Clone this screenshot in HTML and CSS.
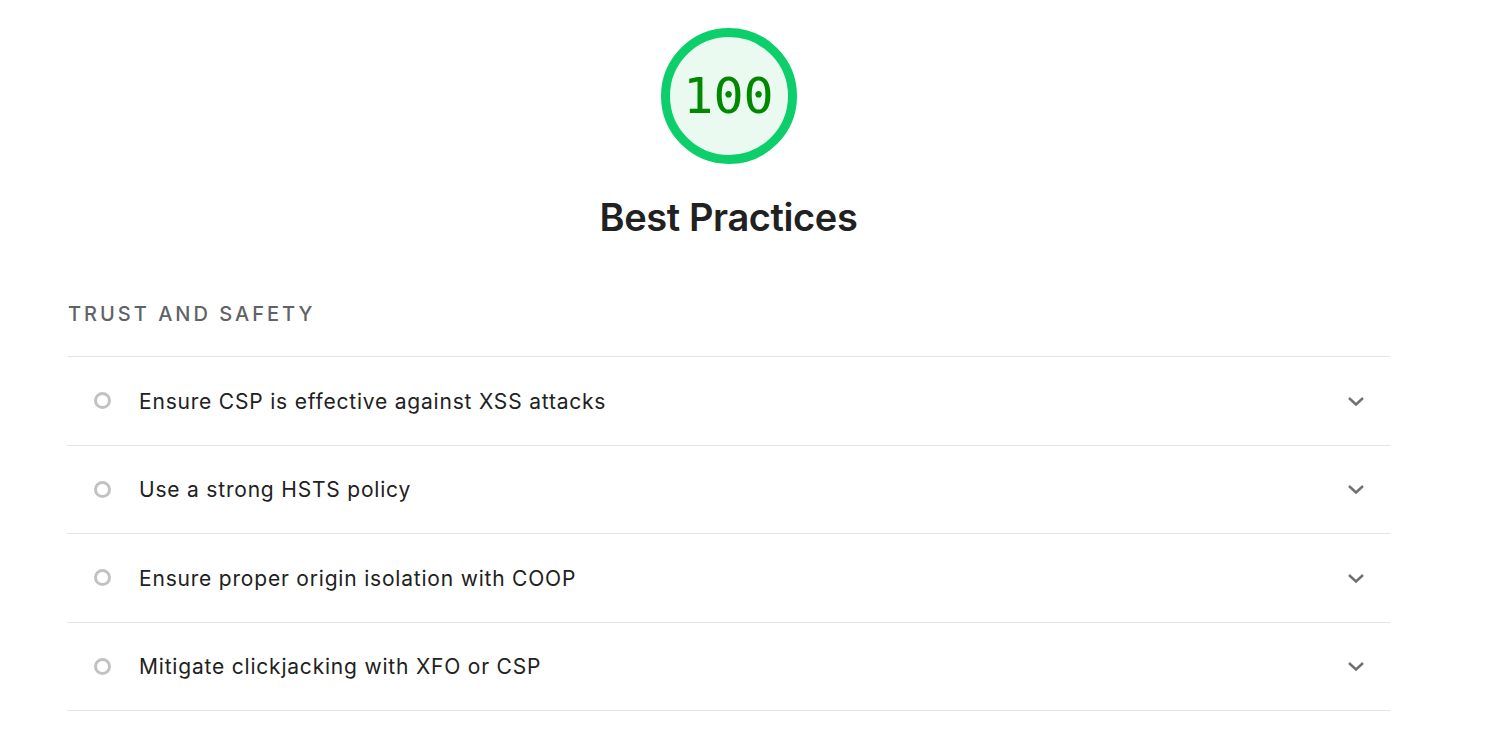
FILE: index.html
```html
<!DOCTYPE html>
<html lang="en">
<head>
    <meta charset="UTF-8">
    <meta name="viewport" content="width=device-width, initial-scale=1.0">
    <title>Best Practices</title>
    <link rel="stylesheet" href="styles.css">
</head>
<body>
    <div class="report">
        <div class="header">
            <div class="gauge">
                <span class="gauge-value">100</span>
            </div>
            <h2 class="title">Best Practices</h2>
        </div>

        <div class="group">
            <h3 class="group-title">TRUST AND SAFETY</h3>

            <div class="audit">
                <span class="audit-icon"></span>
                <span class="audit-text">Ensure CSP is effective against XSS attacks</span>
                <svg class="chevron" viewBox="0 0 24 24"><path d="M5 9l7 6.5L19 9"/></svg>
            </div>

            <div class="audit">
                <span class="audit-icon"></span>
                <span class="audit-text">Use a strong HSTS policy</span>
                <svg class="chevron" viewBox="0 0 24 24"><path d="M5 9l7 6.5L19 9"/></svg>
            </div>

            <div class="audit">
                <span class="audit-icon"></span>
                <span class="audit-text">Ensure proper origin isolation with COOP</span>
                <svg class="chevron" viewBox="0 0 24 24"><path d="M5 9l7 6.5L19 9"/></svg>
            </div>

            <div class="audit">
                <span class="audit-icon"></span>
                <span class="audit-text">Mitigate clickjacking with XFO or CSP</span>
                <svg class="chevron" viewBox="0 0 24 24"><path d="M5 9l7 6.5L19 9"/></svg>
            </div>
        </div>
    </div>
</body>
</html>
```

FILE: styles.css
```css
body {
    margin: 0;
    background-color: #ffffff;
    font-family: Inter, "Noto Sans", sans-serif;
    color: #212121;
}

.report {
    width: 1323px;
    margin-left: 67px;
    padding-top: 28px;
}

/* gauge + titre */
.header {
    display: flex;
    flex-direction: column;
    align-items: center;
}

.gauge {
    width: 118px;
    height: 118px;
    border: 9px solid #0cce6b;
    border-radius: 50%;
    background-color: #eafaf1;
    display: flex;
    justify-content: center;
    align-items: center;
}

.gauge-value {
    font-family: "DejaVu Sans Mono", "Liberation Mono", monospace;
    font-size: 50px;
    color: #008800;
    letter-spacing: 0;
}

.title {
    margin: 29px 0 0;
    font-size: 38px;
    font-weight: 600;
    color: #212121;
    letter-spacing: -0.4px;
    line-height: 48px;
}

/* lista de audits */
.group {
    margin-top: 59px;
}

.group-title {
    margin: 0 0 0 1px;
    font-size: 20px;
    font-weight: 500;
    letter-spacing: 3px;
    color: #5f6368;
    line-height: 28px;
    padding-bottom: 28px;
    border-bottom: 1px solid #e4e4e4;
}

.audit {
    display: flex;
    align-items: center;
    height: 87.5px;
    border-bottom: 1px solid #e4e4e4;
}

.audit-icon {
    box-sizing: border-box;
    width: 17px;
    height: 17px;
    margin-left: 27px;
    border: 3px solid #c2c2c2;
    border-radius: 50%;
}

.audit-text {
    margin-left: 28px;
    padding-top: 1px;
    font-size: 21px;
    letter-spacing: 0.8px;
    color: #212121;
    flex: 1;
}

.chevron {
    width: 24px;
    height: 24px;
    margin-right: 22px;
    fill: none;
    stroke: #707070;
    stroke-width: 2.4;
}
```
